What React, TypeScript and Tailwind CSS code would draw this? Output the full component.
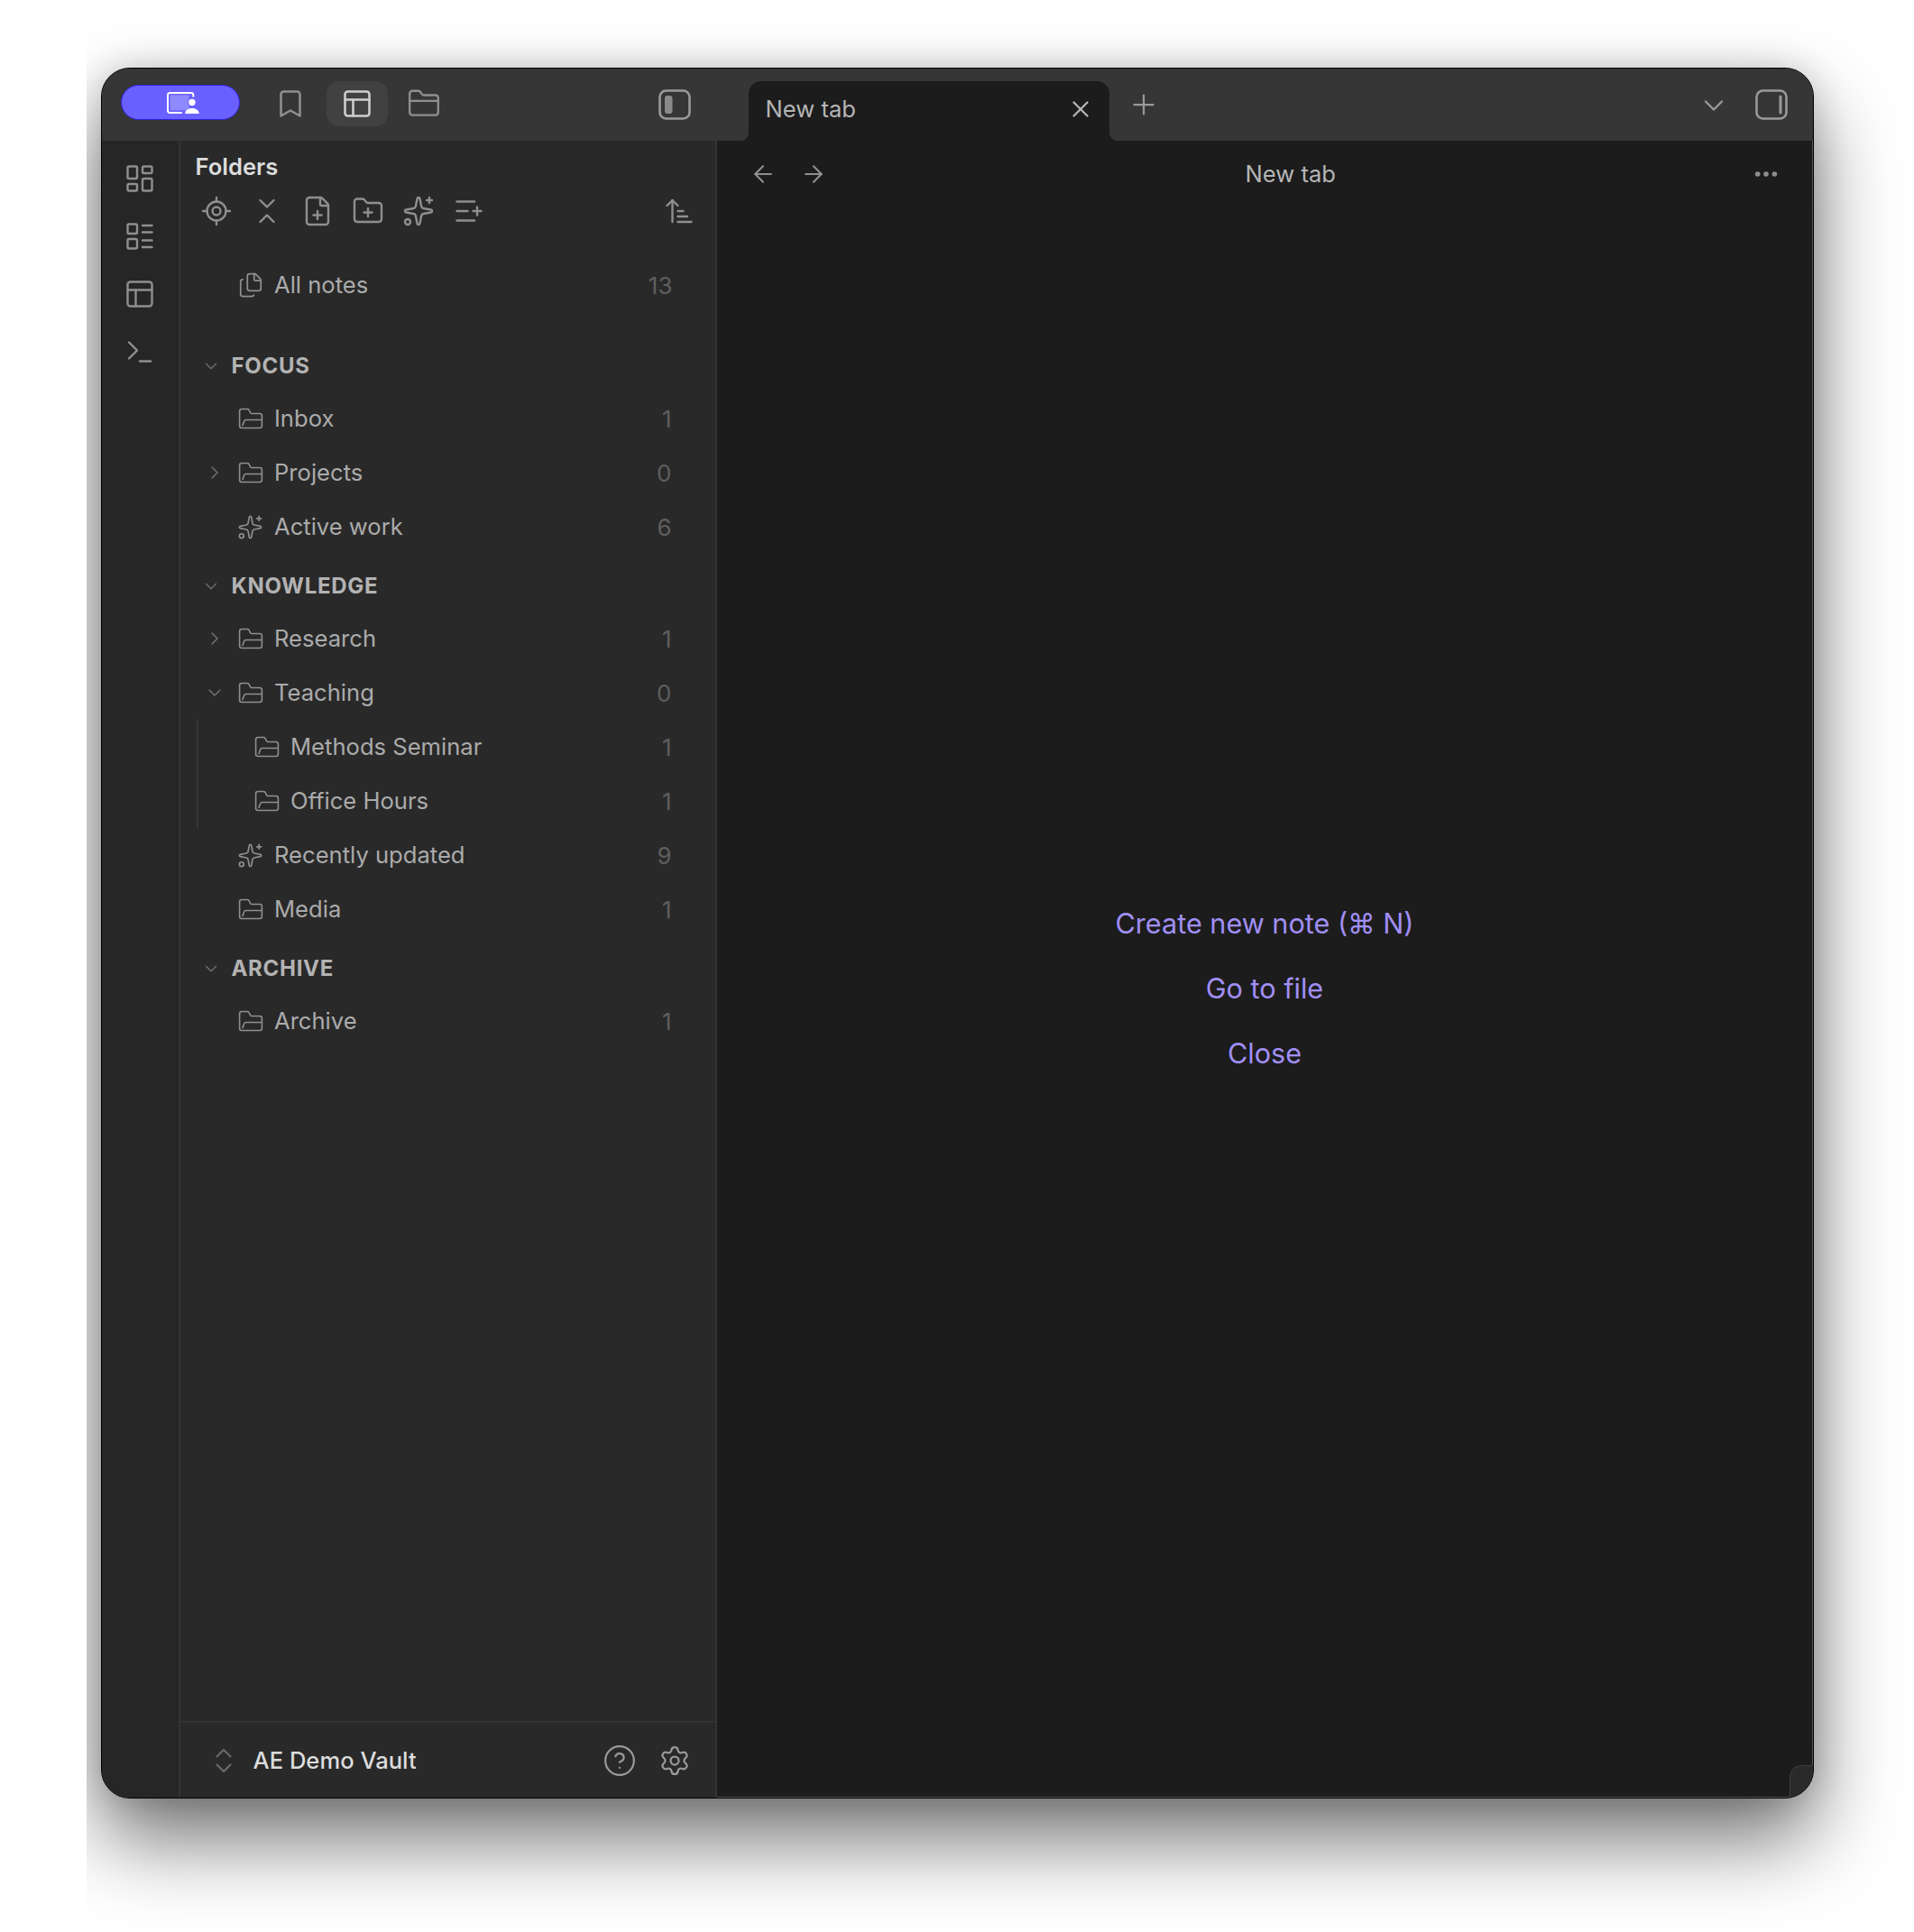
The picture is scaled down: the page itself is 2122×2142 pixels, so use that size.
import {
  ArrowLeft,
  ArrowRight,
  ArrowUpNarrowWide,
  Bookmark,
  ChevronDown,
  ChevronRight,
  ChevronsDownUp,
  ChevronsUpDown,
  CircleHelp,
  Ellipsis,
  FilePlus,
  Files,
  FolderClosed,
  FolderPlus,
  LayoutDashboard,
  LayoutList,
  ListPlus,
  LocateFixed,
  PanelsTopLeft,
  Plus,
  Settings,
  Sparkles,
  Terminal,
  X,
} from "lucide-react";

type Row = { label: string; count: number; kind: "folder" | "smart"; chevron?: "right" | "down" };

const focusRows: Row[] = [
  { label: "Inbox", count: 1, kind: "folder" },
  { label: "Projects", count: 0, kind: "folder", chevron: "right" },
  { label: "Active work", count: 6, kind: "smart" },
];

function OpenFolder() {
  return (
    <svg width="28" height="24" viewBox="0 0 28 24" fill="none" stroke="#8f8f8f" strokeWidth="1.6" strokeLinecap="round" strokeLinejoin="round">
      <path d="M4 1.500h6.200c.8 0 1.400.4 1.800 1l1.600 3.200c.3.5.9.8 1.500.8H24c1.400 0 2.400 1 2.400 2.400v11.200c0 1.400-1 2.400-2.400 2.400H4c-1.400 0-2.400-1-2.400-2.400V3.900C1.600 2.500 2.600 1.500 4 1.500Z" />
      <path d="M5 19.500 6.600 15c.3-.9 1-1.500 2-1.500h17.600" />
    </svg>
  );
}

function TreeRow({ row }: { row: Row }) {
  return (
    <div className="flex h-[60px] items-center pl-[25px] pr-[48px]">
      <span className="flex w-[27px] justify-center text-[#707070]">
        {row.chevron === "right" && <ChevronRight size={24} strokeWidth={1.5} />}
        {row.chevron === "down" && <ChevronDown size={24} strokeWidth={1.5} />}
      </span>
      <span className="ml-[10px] flex w-[32px] justify-center">
        {row.kind === "folder" ? <OpenFolder /> : <Sparkles size={29} strokeWidth={1.4} color="#8f8f8f" />}
      </span>
      <span className="ml-[10.500px] flex-1 text-[25.600px] text-[#ababab]">{row.label}</span>
      <span className="text-[26px] text-[#5f5f5f]">{row.count}</span>
    </div>
  );
}

function SubRow({ label, count }: { label: string; count: number }) {
  return (
    <div className="flex h-[60px] items-center pl-[60px] pr-[48px]">
      <span className="flex w-[32px] justify-center">
        <OpenFolder />
      </span>
      <span className="ml-[10.500px] flex-1 text-[25.600px] text-[#ababab]">{label}</span>
      <span className="text-[26px] text-[#5f5f5f]">{count}</span>
    </div>
  );
}

function SectionHead({ label, className }: { label: string; className: string }) {
  return (
    <div className={`flex h-[58px] items-center pl-[22px] pt-[1px] ${className}`}>
      <span className="flex w-[24px] justify-center text-[#6e6e6e]">
        <ChevronDown size={22} strokeWidth={1.5} />
      </span>
      <span className="ml-[11px] text-[24px] font-bold tracking-[0.700px] text-[#b3b3b3]">{label}</span>
    </div>
  );
}

function PillIcon() {
  return (
    <svg width="36" height="24" viewBox="0 0 107 71" fill="none">
      <rect x="11" y="10" width="62" height="50" fill="#908aff" />
      <path d="M50 68H10a7 7 0 0 1-7-7V10a7 7 0 0 1 7-7h70a7 7 0 0 1 7 7v6" stroke="white" strokeWidth="6" />
      <circle cx="83" cy="34" r="14" fill="#6a60ff" />
      <circle cx="83" cy="34" r="11" fill="white" />
      <path d="M60 71c0-11 10-18 23-18s23 7 23 18Z" fill="white" />
    </svg>
  );
}

function PaneToggle({ side }: { side: "left" | "right" }) {
  return (
    <svg width="36" height="34" viewBox="0 0 36 34" fill="none">
      <rect x="1.500" y="1.500" width="33" height="31" rx="7" stroke="#9a9a9a" strokeWidth="2.600" />
      {side === "left" ? (
        <rect x="7" y="7" width="8.500" height="20" rx="3" fill="#8a8a8a" />
      ) : (
        <rect x="26.500" y="6.500" width="3" height="21" rx="1.500" fill="#9a9a9a" />
      )}
    </svg>
  );
}

const toolIcon = { size: 36, strokeWidth: 1.6, color: "#8f8f8f" };
const toolbar = [LocateFixed, ChevronsDownUp, FilePlus, FolderPlus, Sparkles, ListPlus];

export default function App() {
  return (
    <div className="h-[2142px] w-[2122px] overflow-hidden bg-white pl-[96px] font-['Inter','Noto_Sans','DejaVu_Sans',sans-serif]">
      <div className="h-full overflow-hidden pl-[15.500px] pt-[75px]">
        <div className="relative flex h-[1919px] w-[1899px] flex-col overflow-hidden rounded-[32px] border border-black bg-[#1c1c1c] shadow-[0_46px_90px_rgba(0,0,0,0.55),0_0_36px_rgba(0,0,0,0.16),inset_0_0_0_1px_rgba(255,255,255,0.25)]">
          {/* title bar */}
          <div className="flex h-[80px] shrink-0 bg-[#363636]">
            <div className="flex w-[717px] items-start pl-[21px] pr-[64px] pt-[14px]">
              <div className="mt-[4px] flex h-[39px] w-[132px] items-center justify-center rounded-full border border-[#2f22e0] bg-[#6a60ff] pl-[6px]">
                <PillIcon />
              </div>
              <div className="ml-[22px] flex h-[50px] w-[68px] items-center justify-center text-[#8f8f8f]">
                <Bookmark size={36} strokeWidth={1.7} />
              </div>
              <div className="ml-[6px] flex h-[50px] w-[68px] items-center justify-center rounded-[14px] bg-[#414141] text-[#cfcfcf]">
                <PanelsTopLeft size={36} strokeWidth={1.7} />
              </div>
              <div className="ml-[6px] flex h-[50px] w-[68px] items-center justify-center text-[#8f8f8f]">
                <FolderClosed size={38} strokeWidth={1.5} />
              </div>
              <div className="ml-auto mt-[9px]">
                <PaneToggle side="left" />
              </div>
            </div>
            <div className="relative mt-[14px] flex h-[66px] w-[400px] rounded-t-[14px] bg-[#1c1c1c] pl-[19px] pr-[17px] pt-[13px] before:absolute before:bottom-0 before:left-[-10px] before:h-[10px] before:w-[10px] before:bg-[radial-gradient(circle_at_0_0,transparent_10px,#1c1c1c_10.500px)] before:content-[''] after:absolute after:bottom-0 after:right-[-10px] after:h-[10px] after:w-[10px] after:bg-[radial-gradient(circle_at_100%_0,transparent_10px,#1c1c1c_10.500px)] after:content-['']">
              <span className="flex-1 text-[25.600px] leading-[36px] text-[#b5b5b5]">New tab</span>
              <X size={30} strokeWidth={1.8} color="#b5b5b5" className="mt-[3px]" />
            </div>
            <div className="ml-[20px] mt-[22px] text-[#9a9a9a]">
              <Plus size={36} strokeWidth={1.5} />
            </div>
            <div className="ml-auto mr-[92px] mt-[23px] text-[#9a9a9a]">
              <ChevronDown size={36} strokeWidth={1.5} />
            </div>
            <div className="absolute right-[28px] top-[23px]">
              <PaneToggle side="right" />
            </div>
          </div>

          <div className="flex min-h-0 flex-1">
            {/* ribbon */}
            <div className="flex w-[87px] shrink-0 flex-col items-center gap-[28px] border-r-2 border-[#333333] bg-[#262626] pt-[24px] text-[#8f8f8f]">
              <LayoutDashboard size={36} strokeWidth={1.6} />
              <LayoutList size={36} strokeWidth={1.6} />
              <PanelsTopLeft size={36} strokeWidth={1.6} />
              <Terminal size={36} strokeWidth={1.6} />
            </div>

            {/* sidebar */}
            <div className="flex w-[595px] shrink-0 flex-col border-r-2 border-[#333333] bg-[#292929]">
              <div className="pl-[17px] pt-[13px] text-[25.600px] font-semibold leading-[32px] text-[#dcdcdc]">Folders</div>
              <div className="mt-[15px] flex h-[36px] items-center pl-[12px] pr-[22px]">
                {toolbar.map((Icon, i) => (
                  <span key={i} className="flex w-[56px] justify-center">
                    <Icon {...toolIcon} />
                  </span>
                ))}
                <span className="ml-auto">
                  <ArrowUpNarrowWide {...toolIcon} />
                </span>
              </div>

              <div className="mt-[34px] flex h-[60px] items-center pl-[62px] pr-[47px]">
                <span className="flex w-[32px] justify-center">
                  <Files size={30} strokeWidth={1.4} color="#8f8f8f" />
                </span>
                <span className="ml-[10.500px] flex-1 text-[25.600px] text-[#ababab]">All notes</span>
                <span className="text-[26px] text-[#5f5f5f]">13</span>
              </div>

              <SectionHead label="FOCUS" className="mt-[30px]" />
              {focusRows.map((row) => (
                <TreeRow key={row.label} row={row} />
              ))}

              <SectionHead label="KNOWLEDGE" className="mt-[6px]" />
              <TreeRow row={{ label: "Research", count: 1, kind: "folder", chevron: "right" }} />
              <TreeRow row={{ label: "Teaching", count: 0, kind: "folder", chevron: "down" }} />
              <div className="ml-[18px] border-l-2 border-[#383838]">
                <SubRow label="Methods Seminar" count={1} />
                <SubRow label="Office Hours" count={1} />
              </div>
              <TreeRow row={{ label: "Recently updated", count: 9, kind: "smart" }} />
              <TreeRow row={{ label: "Media", count: 1, kind: "folder" }} />

              <SectionHead label="ARCHIVE" className="mt-[6px]" />
              <TreeRow row={{ label: "Archive", count: 1, kind: "folder" }} />

              <div className="mt-auto flex h-[85px] shrink-0 items-center border-t-2 border-[#333333] pl-[30px] pr-[27px]">
                <ChevronsUpDown size={36} strokeWidth={1.4} color="#6a6a6a" />
                <span className="ml-[15px] flex-1 pt-[1px] text-[25.600px] font-medium text-[#dcdcdc]">AE Demo Vault</span>
                <CircleHelp size={38} strokeWidth={1.4} color="#9a9a9a" />
                <Settings size={36} strokeWidth={1.5} color="#9a9a9a" className="ml-[24px]" />
              </div>
            </div>

            {/* main */}
            <div className="relative flex min-w-0 flex-1 flex-col">
              <div className="flex h-[74px] shrink-0 items-center pl-[36px] pr-[36px] text-[#8f8f8f]">
                <ArrowLeft size={30} strokeWidth={1.7} />
                <ArrowRight size={30} strokeWidth={1.7} className="ml-[26px]" />
                <span className="ml-[464px] text-[25.600px] text-[#b5b5b5]">New tab</span>
                <Ellipsis size={32} strokeWidth={2.200} className="ml-auto" />
              </div>
              <div className="flex flex-col items-center gap-[33px] pt-[774px] text-[30.600px] leading-[39px] text-[#a08ff4]">
                <span>Create new note (⌘ N)</span>
                <span>Go to file</span>
                <span>Close</span>
              </div>
              <div className="absolute bottom-0 right-0 h-[36px] w-[26px] rounded-tl-[14px] border-l border-t border-[#3d3d3d] bg-[#2a2a2a]" />
            </div>
          </div>
        </div>
      </div>
    </div>
  );
}
